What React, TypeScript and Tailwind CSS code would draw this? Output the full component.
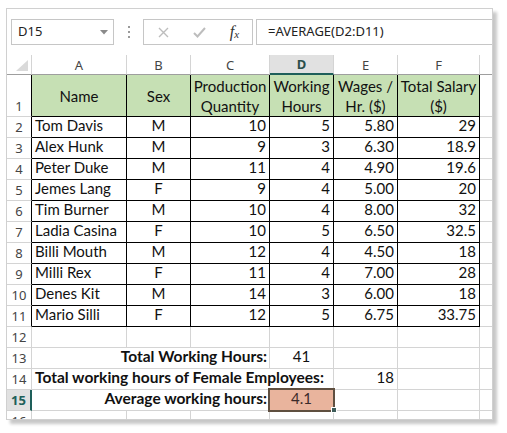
import React from 'react';

type Row = [string, string, string, string, string, string];

const people: Row[] = [
  ['Tom Davis', 'M', '10', '5', '5.80', '29'],
  ['Alex Hunk', 'M', '9', '3', '6.30', '18.9'],
  ['Peter Duke', 'M', '11', '4', '4.90', '19.6'],
  ['Jemes Lang', 'F', '9', '4', '5.00', '20'],
  ['Tim Burner', 'M', '10', '4', '8.00', '32'],
  ['Ladia Casina', 'F', '10', '5', '6.50', '32.5'],
  ['Billi Mouth', 'M', '12', '4', '4.50', '18'],
  ['Milli Rex', 'F', '11', '4', '7.00', '28'],
  ['Denes Kit', 'M', '14', '3', '6.00', '18'],
  ['Mario Silli', 'F', '12', '5', '6.75', '33.75'],
];

// cell styles
const cell = 'flex h-[21px] items-end pb-[3px] leading-[18px] border-r border-b overflow-hidden whitespace-nowrap';
const dataCell = `${cell} border-black`;
const grayCell = `${cell} border-[#d4d4d4]`;
const lastCol = 'h-[21px] border-b border-[#d4d4d4]';

const RowHead = ({ n, dark, sel }: { n: number; dark?: boolean; sel?: boolean }) => (
  <div
    className={
      'flex h-[21px] items-end justify-center pb-[1px] border-b border-b-[#d4d4d4] text-[13px] leading-[18px] ' +
      (sel
        ? 'bg-[#e1e1e1] border-r-2 border-r-[#1e5f5a] font-bold text-[#1e5f5a]'
        : dark
          ? 'border-r border-r-black text-[#444]'
          : 'border-r border-r-[#d4d4d4] text-[#444]')
    }
  >
    {n}
  </div>
);

const ColHead = ({ l, sel }: { l: string; sel?: boolean }) => (
  <div
    className={
      'flex h-[20px] items-center justify-center border-r border-r-[#d4d4d4] text-[13px] ' +
      (sel
        ? 'bg-[#e1e1e1] border-b-2 border-b-[#1e5f5a] font-bold text-[#2b4f4a]'
        : 'border-b border-b-[#9e9e9e] text-[#444]')
    }
  >
    {l}
  </div>
);

const HeadCell = ({ children }: { children: React.ReactNode }) => (
  <div className="flex h-[42px] items-center justify-center border-r border-b border-black bg-[#c6e0b4] text-center leading-[20px]">
    <span>{children}</span>
  </div>
);

const EmptyRow = ({ n }: { n: number }) => (
  <>
    <RowHead n={n} />
    {[0, 1, 2, 3, 4, 5].map((k) => (
      <div key={k} className={grayCell} />
    ))}
    <div className={lastCol} />
  </>
);

export default function App() {
  return (
    <div className="min-h-[433px] w-[507px] bg-white pt-[8px] pl-[6px]">
      <div className="h-[412px] w-[487px] overflow-hidden border border-[#d0d0d0] bg-white shadow-[4px_4px_3px_rgba(0,0,0,0.22)]">
        {/* formula bar */}
        <div className="flex h-[46px] items-center pl-[4px] font-['Noto_Sans','DejaVu_Sans',sans-serif] text-[13px] text-[#222]">
          <div className="flex h-[26px] w-[103px] items-center justify-between border border-[#c6c6c6] pl-[6px] pr-[5px]">
            <span>D15</span>
            <svg width="8" height="5" viewBox="0 0 8 5">
              <path d="M0 0 L8 0 L4 4.5 Z" fill="#8a8a8a" />
            </svg>
          </div>
          <div className="flex w-[29px] flex-col items-center gap-[3px]">
            <span className="h-[2px] w-[2px] bg-[#9a9a9a]" />
            <span className="h-[2px] w-[2px] bg-[#9a9a9a]" />
            <span className="h-[2px] w-[2px] bg-[#9a9a9a]" />
          </div>
          <div className="flex h-[26px] w-[110px] items-center border border-[#c6c6c6]">
            <div className="flex w-[37px] justify-center pl-[2px]">
              <svg width="11" height="11" viewBox="0 0 11 11">
                <path d="M1 1 L10 10 M10 1 L1 10" stroke="#bdbdbd" strokeWidth="1.4" />
              </svg>
            </div>
            <div className="flex w-[36px] justify-center">
              <svg width="13" height="11" viewBox="0 0 13 11">
                <path d="M1 6 L4.5 9.5 L12 1" stroke="#bdbdbd" strokeWidth="2" fill="none" />
              </svg>
            </div>
            <div className="flex w-[35px] items-center justify-center font-['Liberation_Serif',serif] italic text-[#333]">
              <span className="text-[16px] leading-none">f</span>
              <span className="mt-[5px] text-[11px] leading-none">x</span>
            </div>
          </div>
          <div className="ml-[3px] flex h-[26px] flex-1 items-center border border-r-0 border-[#c6c6c6] pl-[11px]">
            =AVERAGE(D2:D11)
          </div>
        </div>

        {/* sheet */}
        <div className="relative grid grid-cols-[25px_95px_64px_79px_64px_64px_82px_12px] font-['Lato','Liberation_Sans',sans-serif] text-[15px] leading-[18px] text-[#111]">
          <div className="relative h-[20px] border-r border-b border-r-[#d4d4d4] border-b-[#9e9e9e]">
            <svg className="absolute right-[3px] bottom-[3px]" width="12" height="11" viewBox="0 0 12 11">
              <path d="M12 0 L12 11 L0 11 Z" fill="#dadada" />
            </svg>
          </div>
          <div className="contents font-['Noto_Sans','DejaVu_Sans',sans-serif]">
            <ColHead l="A" />
            <ColHead l="B" />
            <ColHead l="C" />
            <ColHead l="D" sel />
            <ColHead l="E" />
            <ColHead l="F" />
            <div className="h-[20px] border-b border-b-[#9e9e9e]" />
          </div>

          {/* row 1 */}
          <div className="flex h-[42px] items-end justify-center border-r border-b border-r-black border-b-[#d4d4d4] pb-[1px] font-['Noto_Sans','DejaVu_Sans',sans-serif] text-[13px] leading-[18px] text-[#444]">
            1
          </div>
          <HeadCell>Name</HeadCell>
          <HeadCell>Sex</HeadCell>
          <HeadCell>
            Production
            <br />
            Quantity
          </HeadCell>
          <HeadCell>
            Working
            <br />
            Hours
          </HeadCell>
          <HeadCell>
            Wages /
            <br />
            Hr. ($)
          </HeadCell>
          <HeadCell>
            Total Salary
            <br />
            ($)
          </HeadCell>
          <div className="h-[42px] border-b border-[#d4d4d4]" />

          {/* rows 2-11 */}
          {people.map((p, i) => (
            <React.Fragment key={p[0]}>
              <div className="contents font-['Noto_Sans','DejaVu_Sans',sans-serif]">
                <RowHead n={i + 2} dark />
              </div>
              <div className={`${dataCell} justify-start pl-[3px]`}>{p[0]}</div>
              <div className={`${dataCell} justify-center`}>{p[1]}</div>
              <div className={`${dataCell} justify-end pr-[3px]`}>{p[2]}</div>
              <div className={`${dataCell} justify-end pr-[3px]`}>{p[3]}</div>
              <div className={`${dataCell} justify-end pr-[3px]`}>{p[4]}</div>
              <div className={`${dataCell} justify-end pr-[3px]`}>{p[5]}</div>
              <div className={lastCol} />
            </React.Fragment>
          ))}

          <div className="contents font-['Noto_Sans','DejaVu_Sans',sans-serif]">
            <EmptyRow n={12} />
          </div>

          {/* row 13 */}
          <div className="contents font-['Noto_Sans','DejaVu_Sans',sans-serif]">
            <RowHead n={13} />
          </div>
          <div className={`${grayCell} col-span-3 justify-end pr-[2px] text-[15.5px] font-bold`}>Total Working Hours:</div>
          <div className={`${grayCell} justify-center`}>41</div>
          <div className={grayCell} />
          <div className={grayCell} />
          <div className={lastCol} />

          {/* row 14 */}
          <div className="contents font-['Noto_Sans','DejaVu_Sans',sans-serif]">
            <RowHead n={14} />
          </div>
          <div className={`${grayCell} col-span-4 justify-start pl-[3px] text-[15.5px] font-bold`}>
            Total working hours of Female Employees:
          </div>
          <div className={`${grayCell} justify-end pr-[3px]`}>18</div>
          <div className={grayCell} />
          <div className={lastCol} />

          {/* row 15 */}
          <div className="contents font-['Noto_Sans','DejaVu_Sans',sans-serif]">
            <RowHead n={15} sel />
          </div>
          <div className={`${grayCell} col-span-3 justify-end pr-[2px] text-[15.5px] font-bold`}>Average working hours:</div>
          <div className={`${grayCell} justify-center bg-[#e9b49d] text-[#3a2a2a]`}>4.1</div>
          <div className={grayCell} />
          <div className={grayCell} />
          <div className={lastCol} />

          <div className="contents font-['Noto_Sans','DejaVu_Sans',sans-serif]">
            <EmptyRow n={16} />
          </div>

          {/* selection outline on D15 */}
          <div className="pointer-events-none absolute left-[261px] top-[333px] h-[24px] w-[67px] border-2 border-[#5f4f40]" />
          <div className="pointer-events-none absolute left-[324px] top-[352px] h-[6px] w-[6px] border border-white bg-[#3d5c5a]" />
        </div>
      </div>
    </div>
  );
}
